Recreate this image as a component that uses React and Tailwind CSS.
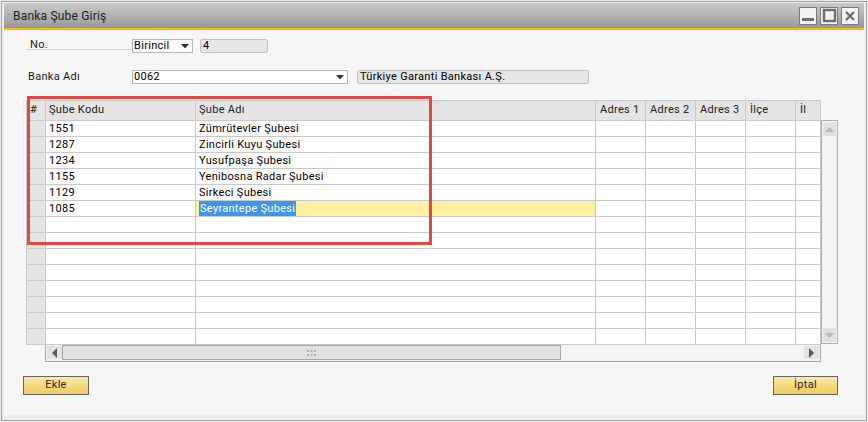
import React from 'react';

const rows = [
  ['1551', 'Zümrütevler Şubesi'],
  ['1287', 'Zincirli Kuyu Şubesi'],
  ['1234', 'Yusufpaşa Şubesi'],
  ['1155', 'Yenibosna Radar Şubesi'],
  ['1129', 'Sirkeci Şubesi'],
  ['1085', 'Seyrantepe Şubesi'],
];
const extraCols = ['Adres 1', 'Adres 2', 'Adres 3', 'İlçe', 'İl'];
const TOTAL_ROWS = 14;

function HeadCell({ children }) {
  return (
    <div className="h-[20px] bg-[#e4e4e4] border-r border-b border-[#c9c9c9] pl-[3px] pt-[2px] leading-[14px] text-[#222] whitespace-nowrap overflow-hidden">
      {children}
    </div>
  );
}

function Cell({ children, className = '' }) {
  return (
    <div className={'h-[16px] border-r border-b border-[#c9c9c9] pl-[3px] leading-[15px] whitespace-nowrap overflow-hidden ' + className}>
      {children}
    </div>
  );
}

function DownTri({ className = '' }) {
  return (
    <svg width="8" height="5" viewBox="0 0 8 5" className={className}>
      <path d="M0 0 H8 L4 4.5 Z" fill="#333" />
    </svg>
  );
}

function TitleBtn({ children }) {
  return (
    <div className="w-[18px] h-[18px] border border-[#7c7c7c] bg-[#f2f2f2] flex items-center justify-center">
      {children}
    </div>
  );
}

function YellowBtn({ children }) {
  return (
    <div className="h-[19px] border border-[#666] bg-linear-to-b from-[#fbeaa6] to-[#f1ca5a] flex items-center justify-center text-[11px] text-[#2a2a2a]">
      {children}
    </div>
  );
}

export default function App() {
  const bodyRows = [];
  for (let i = 0; i < TOTAL_ROWS; i++) {
    const r = rows[i];
    const selected = i === 5;
    bodyRows.push(
      <React.Fragment key={i}>
        <Cell className="bg-[#e4e4e4]" />
        <Cell className="bg-white">{r ? r[0] : ''}</Cell>
        <Cell className={selected ? 'bg-[#fff0a3]' : 'bg-white'}>
          {r ? (
            selected ? (
              <span className="bg-[#3d95ee] text-white px-[1px] py-px">{r[1]}</span>
            ) : (
              r[1]
            )
          ) : (
            ''
          )}
        </Cell>
        {extraCols.map((c) => (
          <Cell key={c} className="bg-white" />
        ))}
      </React.Fragment>
    );
  }

  return (
    <div className="w-[868px] h-[422px] p-px bg-[#ececec] font-[Roboto,sans-serif] text-[11px] tracking-[0.3px] text-black">
      <div className="w-full h-full border border-[#a3a3a3] bg-[#eeeeee] px-[2px] pt-px pb-[5px] flex flex-col">
        {/* Title bar */}
        <div className="h-[25px] bg-linear-to-b from-[#cbcbcb] to-[#999999] flex items-center pl-[9px] pr-[5px]">
          <div className="text-[12px] tracking-[0.2px] text-[#1e1e1e] flex-1">Banka Şube Giriş</div>
          <div className="flex gap-[3px]">
            <TitleBtn>
              <svg width="16" height="16" viewBox="0 0 16 16">
                <rect x="2" y="10" width="12" height="3" fill="#6e6e6e" />
              </svg>
            </TitleBtn>
            <TitleBtn>
              <svg width="16" height="16" viewBox="0 0 16 16">
                <rect x="3" y="2" width="11" height="11" fill="none" stroke="#6e6e6e" strokeWidth="2.4" />
              </svg>
            </TitleBtn>
            <TitleBtn>
              <svg width="16" height="16" viewBox="0 0 16 16">
                <path d="M4 4 L12 12 M12 4 L4 12" stroke="#6e6e6e" strokeWidth="2.4" />
              </svg>
            </TitleBtn>
          </div>
        </div>
        <div className="h-[2px] bg-[#f7b90e]" />

        {/* Body */}
        <div className="flex-1 bg-[#f6f6f6] flex flex-col">
          {/* Row: No. */}
          <div className="mt-[9px] h-[14px] flex items-start">
            <div className="ml-[22px] w-[106px] h-[11px] border-b border-[#c9d1dc] pl-[4px] leading-[11px] text-[#1c1c1c]">
              No.
            </div>
            <div className="w-[61px] h-[14px] border border-[#b5b5b5] bg-white flex items-center pl-px pr-[3px]">
              <span className="flex-1 leading-[12px]">Birincil</span>
              <DownTri />
            </div>
            <div className="ml-[7px] w-[68px] h-[14px] border border-[#c2c2c2] rounded-[2px] bg-[#e6e6e6] pl-[2px] leading-[12px]">
              4
            </div>
          </div>

          {/* Row: Banka Adı */}
          <div className="mt-[17px] h-[14px] flex items-start">
            <div className="ml-[24px] w-[104px] leading-[14px] text-[#1c1c1c]">Banka Adı</div>
            <div className="w-[216px] h-[14px] border border-[#b5b5b5] bg-white flex items-center pl-px pr-[3px]">
              <span className="flex-1 leading-[12px]">0062</span>
              <DownTri />
            </div>
            <div className="ml-[9px] w-[232px] h-[14px] border border-[#c2c2c2] rounded-[2px] bg-[#e6e6e6] pl-[2px] leading-[12px]">
              Türkiye Garanti Bankası A.Ş.
            </div>
          </div>

          {/* Grid + vertical scrollbar */}
          <div className="mt-[16px] flex items-start">
            <div className="relative ml-[22px]">
              <div className="grid grid-cols-[19px_150px_400px_50px_50px_50px_50px_25px] w-[795px] border-l border-t border-[#c9c9c9]">
                <HeadCell>#</HeadCell>
                <HeadCell>Şube Kodu</HeadCell>
                <HeadCell>Şube Adı</HeadCell>
                {extraCols.map((c) => (
                  <HeadCell key={c}>
                    <span className="pl-px">{c}</span>
                  </HeadCell>
                ))}
                {bodyRows}
              </div>
              <div className="absolute left-[1px] top-[-4px] w-[405px] h-[149px] border-[3px] border-[#e4473f]" />
            </div>
            <div className="mt-[20px] w-[17px] h-[224px] border border-[#acacac] bg-[#f4f4f4] flex flex-col items-center justify-between py-px">
              <div className="w-[13px] h-[14px] bg-[#e0e0e0] flex items-center justify-center">
                <svg width="9" height="5" viewBox="0 0 9 5">
                  <path d="M0 5 L4.5 0 L9 5 Z" fill="#b9b9b9" />
                </svg>
              </div>
              <div className="w-[13px] h-[14px] bg-[#e0e0e0] flex items-center justify-center">
                <svg width="9" height="5" viewBox="0 0 9 5">
                  <path d="M0 0 L4.5 5 L9 0 Z" fill="#b9b9b9" />
                </svg>
              </div>
            </div>
          </div>

          {/* Horizontal scrollbar */}
          <div className="ml-[41px] w-[776px] h-[17px] border-x border-b border-[#a8a8a8] bg-[#f4f4f4] flex items-start">
            <div className="mt-px ml-px w-[15px] h-[13px] bg-[#e3e3e3] flex items-center justify-center">
              <svg width="5" height="10" viewBox="0 0 5 10">
                <path d="M5 0 L0 5 L5 10 Z" fill="#5a5a5a" />
              </svg>
            </div>
            <div className="w-[499px] h-[15px] border border-[#a8a8a8] bg-[#e1e1e1] flex items-center justify-center">
              <svg width="9" height="6" viewBox="0 0 9 6">
                <g fill="#b3b3b3">
                  <rect x="0" y="0" width="2" height="2" />
                  <rect x="3.5" y="0" width="2" height="2" />
                  <rect x="7" y="0" width="2" height="2" />
                  <rect x="0" y="4" width="2" height="2" />
                  <rect x="3.5" y="4" width="2" height="2" />
                  <rect x="7" y="4" width="2" height="2" />
                </g>
              </svg>
            </div>
            <div className="flex-1" />
            <div className="mt-px mr-px w-[15px] h-[13px] bg-[#e3e3e3] flex items-center justify-center">
              <svg width="5" height="10" viewBox="0 0 5 10">
                <path d="M0 0 L5 5 L0 10 Z" fill="#5a5a5a" />
              </svg>
            </div>
          </div>

          {/* Buttons */}
          <div className="mt-[14px] flex justify-between pl-[19px] pr-[26px]">
            <div className="w-[66px]">
              <YellowBtn>Ekle</YellowBtn>
            </div>
            <div className="w-[65px]">
              <YellowBtn>İptal</YellowBtn>
            </div>
          </div>
        </div>
      </div>
    </div>
  );
}
